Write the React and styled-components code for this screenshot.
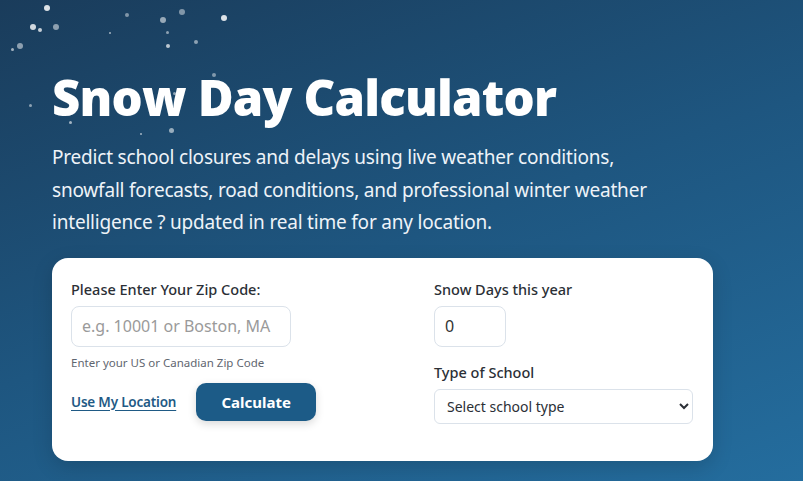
import React from "react";
import styled, { createGlobalStyle } from "styled-components";

const GlobalStyle = createGlobalStyle`
  html, body {
    margin: 0;
    padding: 0;
  }
  body {
    font-family: "Noto Sans", "Open Sans", sans-serif;
  }
`;

const Hero = styled.section`
  position: relative;
  overflow: hidden;
  width: 803px;
  height: 481px;
  box-sizing: border-box;
  padding: 66px 52px 0;
  background: linear-gradient(160deg, #1a3c5b 0%, #1e5680 50%, #246d9e 100%);
`;

const Flake = styled.span`
  position: absolute;
  border-radius: 50%;
  background: #fff;
`;

const Title = styled.h1`
  margin: 0;
  font-family: "Open Sans", sans-serif;
  font-weight: 800;
  font-size: 49px;
  line-height: 62px;
  letter-spacing: -0.8px;
  color: #fff;
`;

const Lead = styled.p`
  margin: 13px 0 0;
  max-width: 620px;
  font-size: 19px;
  line-height: 32.5px;
  letter-spacing: -0.2px;
  color: #eef3f8;
`;

const Card = styled.form`
  display: grid;
  grid-template-columns: 1fr 259px;
  width: 661px;
  box-sizing: border-box;
  margin-top: 19px;
  padding: 21px 20px 37px 19px;
  background: #fff;
  border-radius: 16px;
  box-shadow: 0 6px 20px rgba(0, 0, 0, 0.15);
`;

const Column = styled.div`
  display: flex;
  flex-direction: column;
`;

const Label = styled.label`
  font-size: 14.5px;
  font-weight: 500;
  color: #2b2f36;
  line-height: 20px;
  margin-top: ${(p) => p.$top || 0}px;
  margin-bottom: ${(p) => p.$gap || 7}px;
`;

const TextInput = styled.input`
  box-sizing: border-box;
  width: ${(p) => p.$width}px;
  height: 41px;
  padding: 0 10px;
  border: 1px solid #dbe2ea;
  border-radius: 8px;
  font-family: inherit;
  font-size: 16px;
  color: #333;
  outline: none;
  &::placeholder {
    color: #9a9a9a;
  }
`;

const Hint = styled.small`
  margin-top: 8px;
  font-size: 11.5px;
  color: #5f6670;
`;

const Actions = styled.div`
  display: flex;
  align-items: center;
  gap: 20px;
  margin-top: 13px;
`;

const LocationLink = styled.a`
  font-size: 13.5px;
  font-weight: 600;
  letter-spacing: -0.2px;
  color: #1f5a85;
  text-decoration: underline;
  text-underline-offset: 3px;
`;

const Button = styled.button`
  width: 120px;
  height: 38px;
  border: none;
  border-radius: 10px;
  background: #1c5b87;
  color: #fff;
  font-family: inherit;
  font-size: 15px;
  font-weight: 700;
  box-shadow: 0 3px 8px rgba(0, 0, 0, 0.15);
  cursor: pointer;
`;

const Select = styled.select`
  box-sizing: border-box;
  width: 259px;
  height: 35px;
  padding: 0 8px;
  border: 1px solid #dbe2ea;
  border-radius: 6px;
  background: #fff;
  font-family: inherit;
  font-size: 14px;
  color: #2b2f36;
`;

const flakes = [
  [47, 8, 6, 0.85], [33, 27, 6, 0.8], [40, 30, 4, 0.75], [56, 27, 6, 0.5],
  [20, 46, 6, 0.5], [12, 49, 3, 0.6], [127, 15, 4, 0.45], [163, 20, 6, 0.55],
  [182, 12, 6, 0.45], [224, 18, 6, 0.85], [110, 33, 2, 0.6], [167, 32, 3, 0.5],
  [168, 46, 4, 0.7], [196, 42, 4, 0.5], [214, 75, 4, 0.45], [30, 105, 3, 0.5],
  [70, 122, 3, 0.6], [171, 130, 5, 0.55], [141, 134, 2, 0.6], [174, 93, 3, 0.5],
];

export default function App() {
  return (
    <>
      <GlobalStyle />
      <Hero>
        {flakes.map(([x, y, s, o], i) => (
          <Flake
            key={i}
            style={{ left: x - s / 2, top: y - s / 2, width: s, height: s, opacity: o }}
          />
        ))}
        <Title>Snow Day Calculator</Title>
        <Lead>
          Predict school closures and delays using live weather conditions,
          snowfall forecasts, road conditions, and professional winter weather
          intelligence ? updated in real time for any location.
        </Lead>
        <Card onSubmit={(e) => e.preventDefault()}>
          <Column>
            <Label htmlFor="zip">Please Enter Your Zip Code:</Label>
            <TextInput id="zip" $width={220} placeholder="e.g. 10001 or Boston, MA" />
            <Hint>Enter your US or Canadian Zip Code</Hint>
            <Actions>
              <LocationLink href="#">Use My Location</LocationLink>
              <Button type="submit">Calculate</Button>
            </Actions>
          </Column>
          <Column>
            <Label htmlFor="days">Snow Days this year</Label>
            <TextInput id="days" $width={72} defaultValue="0" />
            <Label htmlFor="school" $top={15}>Type of School</Label>
            <Select id="school" defaultValue="">
              <option value="">Select school type</option>
              <option>Public School</option>
              <option>Private School</option>
              <option>College / University</option>
            </Select>
          </Column>
        </Card>
      </Hero>
    </>
  );
}
